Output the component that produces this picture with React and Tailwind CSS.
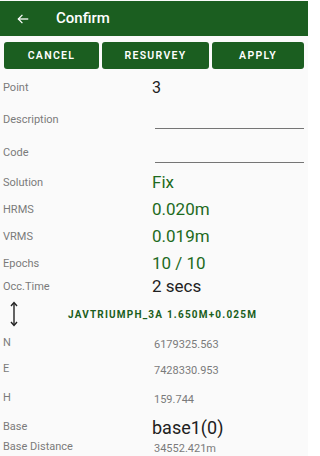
import React from 'react';

const Label = ({ children }) => (
  <div className="w-[152px] shrink-0 pl-[3px] text-[11px] text-[#7a7a7a]">{children}</div>
);

const Row = ({ h, label, children }) => (
  <div className={`flex items-center ${h}`}>
    <Label>{label}</Label>
    <div className="flex-1 pr-[4px]">{children}</div>
  </div>
);

const ArrowIcon = () => (
  <svg width="10" height="26" viewBox="0 0 10 26" fill="none" stroke="#212121" strokeWidth="1.4">
    <path d="M5 2 L5 24" />
    <path d="M2 5 L5 1.5 L8 5" />
    <path d="M2 21 L5 24.5 L8 21" />
  </svg>
);

export default function App() {
  return (
    <div className="w-[308px] h-[456px] overflow-hidden bg-[#fafafa] font-['Roboto',sans-serif]">
      {/* barra superior */}
      <div className="mt-[1px] h-[35px] bg-[#1b5e20] flex items-center">
        <svg className="ml-[16px]" width="14" height="14" viewBox="0 0 24 24" fill="none" stroke="white" strokeWidth="2.2">
          <path d="M21 12 H4" />
          <path d="M11 5 L4 12 L11 19" />
        </svg>
        <span className="ml-[26px] text-[15px] font-medium text-white">Confirm</span>
      </div>

      {/* botones */}
      <div className="flex gap-[3px] px-[4px] mt-[6px]">
        <button className="w-[95px] h-[27px] rounded-[3px] bg-[#1b5e20] text-white text-[10.5px] font-semibold tracking-[1.3px]">CANCEL</button>
        <button className="w-[107px] h-[27px] rounded-[3px] bg-[#1b5e20] text-white text-[10.5px] font-semibold tracking-[1.3px]">RESURVEY</button>
        <button className="flex-1 h-[27px] rounded-[3px] bg-[#1b5e20] text-white text-[10.5px] font-semibold tracking-[1.3px]">APPLY</button>
      </div>

      <div className="mt-[3px]">
        <Row h="h-[32px]" label="Point">
          <span className="text-[16px] text-[#212121]">3</span>
        </Row>
        <Row h="h-[33px]" label="Description">
          <div className="ml-[3px] h-[17px] border-b border-[#757575]"></div>
        </Row>
        <Row h="h-[33px]" label="Code">
          <div className="ml-[3px] h-[17px] border-b border-[#757575] translate-y-[1px]"></div>
        </Row>
        <Row h="h-[26px]" label="Solution">
          <span className="text-[17px] text-[#1e6b1e]">Fix</span>
        </Row>
        <Row h="h-[28px]" label="HRMS">
          <span className="text-[17px] text-[#1e6b1e]">0.020m</span>
        </Row>
        <Row h="h-[26px]" label="VRMS">
          <span className="text-[17px] text-[#1e6b1e]">0.019m</span>
        </Row>
        <Row h="h-[28px]" label="Epochs">
          <span className="text-[17px] text-[#1e6b1e]">10 / 10</span>
        </Row>
        <Row h="h-[18px]" label="Occ.Time">
          <span className="text-[17px] text-[#212121]">2 secs</span>
        </Row>

        {/* antena */}
        <div className="flex items-center h-[36px]">
          <div className="w-[68px] pl-[9px] flex items-center">
            <ArrowIcon />
          </div>
          <span className="text-[10px] font-bold tracking-[1.2px] text-[#1b5e20]">JAVTRIUMPH_3A 1.650M+0.025M</span>
        </div>

        <Row h="h-[22px]" label="N">
          <span className="ml-[2px] text-[11px] text-[#7a7a7a]">6179325.563</span>
        </Row>
        <Row h="h-[30px]" label="E">
          <span className="ml-[2px] text-[11px] text-[#7a7a7a]">7428330.953</span>
        </Row>
        <Row h="h-[28px]" label="H">
          <span className="ml-[2px] text-[11px] text-[#7a7a7a]">159.744</span>
        </Row>
        <Row h="h-[30px]" label="Base">
          <span className="text-[18px] text-[#212121]">base1(0)</span>
        </Row>
        <Row h="h-[10px]" label="Base Distance">
          <span className="ml-[2px] text-[11px] text-[#7a7a7a]">34552.421m</span>
        </Row>
      </div>
    </div>
  );
}
